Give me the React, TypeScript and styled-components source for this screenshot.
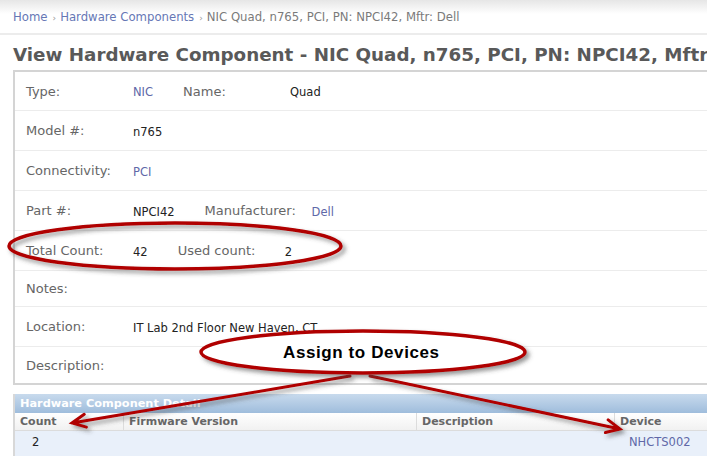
import React from 'react'
import styled, { createGlobalStyle } from 'styled-components'

const Global = createGlobalStyle`
  * {
    margin: 0;
    padding: 0;
    box-sizing: border-box;
  }
  body {
    background: #fff;
    overflow: hidden;
    font-family: 'DejaVu Sans', Verdana, sans-serif;
  }
`

const Page = styled.div`
  position: relative;
  width: 960px;
  height: 456px;
  overflow: hidden;
`

const Crumbs = styled.div`
  height: 35px;
  padding: 10px 0 0 13px;
  font-size: 11.7px;
  line-height: 15px;
  color: #7a7a7a;
  background: linear-gradient(#e6e6e6, #fff 14px);
  border-bottom: 2px solid #ececec;
`

const Crumb = styled.a`
  color: #6677b5;
  text-decoration: none;
`

const Sep = styled.span`
  color: #999;
  font-size: 9px;
  margin: 0 4px 0 5px;
`

const Title = styled.h1`
  margin: 8px 0 3px 13px;
  font-size: 18.3px;
  line-height: 24px;
  font-weight: bold;
  color: #595959;
  white-space: nowrap;
`

const DetailBox = styled.div`
  margin-left: 13px;
  border: 2px solid #d4d4d4;
  border-right: none;
`

const Row = styled.div<{ $h: number; $last?: boolean }>`
  display: flex;
  align-items: center;
  height: ${p => p.$h}px;
  padding-left: 11px;
  border-bottom: ${p => (p.$last ? 'none' : '1px solid #ececec')};
`

const Label = styled.span`
  display: inline-block;
  width: 107px;
  font-size: 13px;
  color: #666;
`

const Value = styled.span<{ $link?: boolean }>`
  font-size: 11.5px;
  margin-right: 30px;
  color: ${p => (p.$link ? '#6068a8' : '#222')};
  padding-top: 2px;
`

const Grid = styled.div`
  margin: 9px 0 0 13px;
  border-left: 2px solid #d8d8d8;
`

const Caption = styled.div`
  height: 19px;
  padding-left: 5px;
  font-size: 11.3px;
  line-height: 19px;
  font-weight: bold;
  color: #fff;
  background: linear-gradient(#c8daed, #9fbddc);
`

const Cols = styled.div<{ $head?: boolean }>`
  display: grid;
  grid-template-columns: 108px 293px 198px 1fr;
  height: ${p => (p.$head ? '18px' : '26px')};
  background: ${p => (p.$head ? 'linear-gradient(#fff, #f1f1f1)' : '#e9f0fa')};
  border-bottom: ${p => (p.$head ? '1px solid #dcdcdc' : 'none')};
`

const Head = styled.div`
  font-size: 11px;
  font-weight: bold;
  color: #666;
  line-height: 17px;
  padding-left: 5px;
  & + & {
    border-left: 1px solid #dcdcdc;
  }
`

const Cell = styled.div<{ $link?: boolean }>`
  font-size: 11.5px;
  line-height: 22px;
  padding-left: ${p => (p.$link ? '15px' : '17px')};
  color: ${p => (p.$link ? '#6068a8' : '#222')};
`

const Overlay = styled.svg`
  position: absolute;
  left: 0;
  top: 0;
  pointer-events: none;
`

type Pair = [string, string?, boolean?]
const rows: { h: number; pairs: Pair[] }[] = [
  { h: 39, pairs: [['Type:', 'NIC', true], ['Name:', 'Quad']] },
  { h: 40, pairs: [['Model #:', 'n765']] },
  { h: 40, pairs: [['Connectivity:', 'PCI', true]] },
  { h: 40, pairs: [['Part #:', 'NPCI42'], ['Manufacturer:', 'Dell', true]] },
  { h: 40, pairs: [['Total Count:', '42'], ['Used count:', '2']] },
  { h: 36, pairs: [['Notes:']] },
  { h: 40, pairs: [['Location:', 'IT Lab 2nd Floor New Haven, CT']] },
  { h: 36, pairs: [['Description:']] }
]

const RED = '#b00000'

function arrow(x1: number, y1: number, x2: number, y2: number) {
  const a = Math.atan2(y2 - y1, x2 - x1)
  const len = 15
  const w = (d: number) =>
    `${x2 - len * Math.cos(a + d)},${y2 - len * Math.sin(a + d)}`
  return `M${x1},${y1} L${x2},${y2} M${w(0.45)} L${x2},${y2} L${w(-0.45)}`
}

function Annotations() {
  return (
    <Overlay width='707' height='456' viewBox='0 0 707 456'>
      <defs>
        <filter id='sh' x='-10%' y='-30%' width='120%' height='160%'>
          <feDropShadow dx='3' dy='3' stdDeviation='2' floodColor='#444' floodOpacity='0.55' />
        </filter>
      </defs>
      <ellipse cx='175' cy='246' rx='166' ry='23' fill='none' stroke={RED} strokeWidth='3.5' filter='url(#sh)' />
      <g filter='url(#sh)' fill='none' stroke={RED} strokeWidth='3' strokeLinecap='round'>
        <path d={arrow(350, 376, 72, 423)} />
        <path d={arrow(370, 376, 620, 429)} />
      </g>
      <ellipse cx='363' cy='352' rx='162' ry='21' fill='#fff' stroke={RED} strokeWidth='3.5' filter='url(#sh)' />
      <text
        x='283'
        y='358'
        fontFamily="'Liberation Sans', Arial, sans-serif"
        fontWeight='bold'
        fontSize='17'
        letterSpacing='0.6'
        fill='#000'
      >
        Assign to Devices
      </text>
    </Overlay>
  )
}

export default function App() {
  return (
    <Page>
      <Global />
      <Crumbs>
        <Crumb href='#'>Home</Crumb>
        <Sep>›</Sep>
        <Crumb href='#'>Hardware Components</Crumb>
        <Sep>›</Sep>
        NIC Quad, n765, PCI, PN: NPCI42, Mftr: Dell
      </Crumbs>
      <Title>View Hardware Component - NIC Quad, n765, PCI, PN: NPCI42, Mftr: Dell</Title>
      <DetailBox>
        {rows.map((r, i) => (
          <Row key={i} $h={r.h} $last={i === rows.length - 1}>
            {r.pairs.map(([label, value, link]) => (
              <React.Fragment key={label}>
                <Label>{label}</Label>
                {value ? <Value $link={link}>{value}</Value> : null}
              </React.Fragment>
            ))}
          </Row>
        ))}
      </DetailBox>
      <Grid>
        <Caption>Hardware Component Detail</Caption>
        <Cols $head>
          <Head>Count</Head>
          <Head>Firmware Version</Head>
          <Head>Description</Head>
          <Head>Device</Head>
        </Cols>
        <Cols>
          <Cell>2</Cell>
          <Cell />
          <Cell />
          <Cell $link>NHCTS002</Cell>
        </Cols>
      </Grid>
      <Annotations />
    </Page>
  )
}
